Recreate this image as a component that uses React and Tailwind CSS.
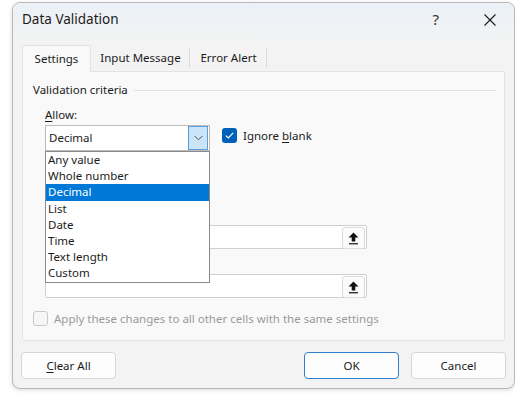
import React from 'react';

const font = { fontFamily: '"Noto Sans", "Open Sans", sans-serif' };

const options = ['Any value', 'Whole number', 'Decimal', 'List', 'Date', 'Time', 'Text length', 'Custom'];

function RefButton() {
    return (
        <div className="w-[23px] h-[22px] mt-[1px] mr-[1px] rounded-[3px] border border-[#dcdcdc] bg-[#fbfbfb] flex items-center justify-center">
            <svg width="11" height="13" viewBox="0 0 11 13">
                <path d="M5.5 0.5 L10.5 5.5 L7.3 5.5 L7.3 9.5 L3.7 9.5 L3.7 5.5 L0.5 5.5 Z" fill="#111" />
                <rect x="1" y="11" width="9" height="1.4" fill="#333" />
            </svg>
        </div>
    );
}

function RangeField() {
    return (
        <div className="w-[322px] h-[24px] bg-white border border-[#cfcfcf] rounded-[2px] flex justify-end">
            <RefButton />
        </div>
    );
}

function Btn({ children, primary }) {
    return (
        <div className={`w-[95px] h-[27px] rounded-[4px] bg-[#fdfdfd] flex items-center justify-center text-[11.5px] text-[#1b1b1b] ${primary ? 'border border-[#2f7fd0]' : 'border border-[#d6d6d6]'}`}>
            {children}
        </div>
    );
}

export default function App() {
    return (
        <div className="w-[515px] h-[394px] bg-white pl-[12px] pt-[2px] overflow-hidden" style={font}>
            <div className="w-[503px] h-[387px] rounded-[8px] border border-[#b9b9b9] bg-[#f3f3f3] shadow-[0_1px_4px_rgba(0,0,0,0.15)] flex flex-col overflow-hidden">
                {/* title bar */}
                <div className="h-[40px] shrink-0 flex items-center pl-[9px] pr-[18px] bg-gradient-to-b from-[#ebf1f7] to-[#f3f3f3]">
                    <span className="text-[13.5px] text-[#1b1b1b] -mt-[7px]">Data Validation</span>
                    <span className="ml-auto text-[15px] text-[#333] -mt-[7px] mr-[45px]">?</span>
                    <svg width="12" height="12" viewBox="0 0 12 12" className="-mt-[7px]">
                        <path d="M0.5 0.5 L11.5 11.5 M11.5 0.5 L0.5 11.5" stroke="#1b1b1b" strokeWidth="1.1" />
                    </svg>
                </div>

                {/* tabs */}
                <div className="flex pl-[9px] h-[28px] items-end">
                    <div className="w-[69px] h-[27px] bg-[#f9f9f9] border border-b-0 border-[#e3e3e3] rounded-t-[2px] flex items-center justify-center text-[11.5px] text-[#1b1b1b] relative z-10 -mb-[1px]">
                        Settings
                    </div>
                    <div className="w-[99px] h-[26px] flex items-center justify-center text-[11.5px] text-[#1b1b1b] relative">
                        Input Message
                        <span className="absolute right-0 top-[3px] h-[20px] w-px bg-[#dcdcdc]" />
                    </div>
                    <div className="w-[77px] h-[26px] flex items-center justify-center text-[11.5px] text-[#1b1b1b] relative">
                        Error Alert
                        <span className="absolute right-0 top-[3px] h-[20px] w-px bg-[#dcdcdc]" />
                    </div>
                </div>

                {/* panel */}
                <div className="ml-[9px] w-[483px] h-[270px] bg-[#f9f9f9] border border-[#e3e3e3] rounded-[2px] px-[10px] flex flex-col">
                    <div className="flex items-center mt-[10px] h-[16px]">
                        <span className="text-[11.5px] text-[#1b1b1b]">Validation criteria</span>
                        <div className="flex-1 h-px bg-[#e0e0e0] ml-[6px] mr-[-2px]" />
                    </div>

                    <div className="ml-[12px] mt-[9px] text-[11.5px] text-[#1b1b1b] h-[16px] leading-[16px]">
                        <span className="underline underline-offset-2">A</span>llow:
                    </div>

                    <div className="ml-[12px] mt-[2px] flex items-start">
                        <div className="relative w-[165px]">
                            <div className="h-[26px] bg-white border border-[#bcbcbc] flex items-center">
                                <span className="pl-[3px] text-[11.5px] text-[#1b1b1b]">Decimal</span>
                                <div className="ml-auto mr-[1px] w-[20px] h-[24px] bg-[#cce4f7] border border-[#5a9ee0] flex items-center justify-center">
                                    <svg width="9" height="6" viewBox="0 0 9 6">
                                        <path d="M0.5 0.8 L4.5 4.8 L8.5 0.8" fill="none" stroke="#555" strokeWidth="1" />
                                    </svg>
                                </div>
                            </div>
                            <div className="absolute left-0 top-[26px] w-[165px] bg-white border border-[#8a8a8a] z-20">
                                {options.map((o) => (
                                    <div
                                        key={o}
                                        className={`h-[16.2px] leading-[16px] pl-[2px] text-[11.5px] ${o === 'Decimal' ? 'bg-[#0078d7] text-white' : 'text-[#1b1b1b]'}`}
                                    >
                                        {o}
                                    </div>
                                ))}
                            </div>
                        </div>
                        <div className="ml-[12px] mt-[2px] flex items-center">
                            <div className="w-[15px] h-[15px] rounded-[3px] bg-[#005fb8] flex items-center justify-center">
                                <svg width="9" height="7" viewBox="0 0 9 7">
                                    <path d="M0.8 3.6 L3.3 6 L8.2 0.9" fill="none" stroke="white" strokeWidth="1.2" />
                                </svg>
                            </div>
                            <span className="ml-[6px] text-[11.5px] text-[#1b1b1b]">
                                Ignore <span className="underline underline-offset-2">b</span>lank
                            </span>
                        </div>
                    </div>

                    {/* range fields (labels hidden under the open list) */}
                    <div className="ml-[12px] mt-[74px]">
                        <RangeField />
                    </div>
                    <div className="ml-[12px] mt-[25px]">
                        <RangeField />
                    </div>

                    <div className="mt-[12px] flex items-center">
                        <div className="w-[15px] h-[15px] rounded-[3px] border border-[#c9c9c9] bg-[#f6f6f6]" />
                        <span className="ml-[6px] text-[11.5px] text-[#9a9a9a]">Apply these changes to all other cells with the same settings</span>
                    </div>
                </div>

                {/* footer */}
                <div className="flex items-center mt-[11px] pl-[8px]">
                    <Btn>
                        <span><span className="underline underline-offset-2">C</span>lear All</span>
                    </Btn>
                    <div className="ml-auto flex gap-[12px] mr-[8px]">
                        <Btn primary>OK</Btn>
                        <Btn>Cancel</Btn>
                    </div>
                </div>
            </div>
        </div>
    );
}
